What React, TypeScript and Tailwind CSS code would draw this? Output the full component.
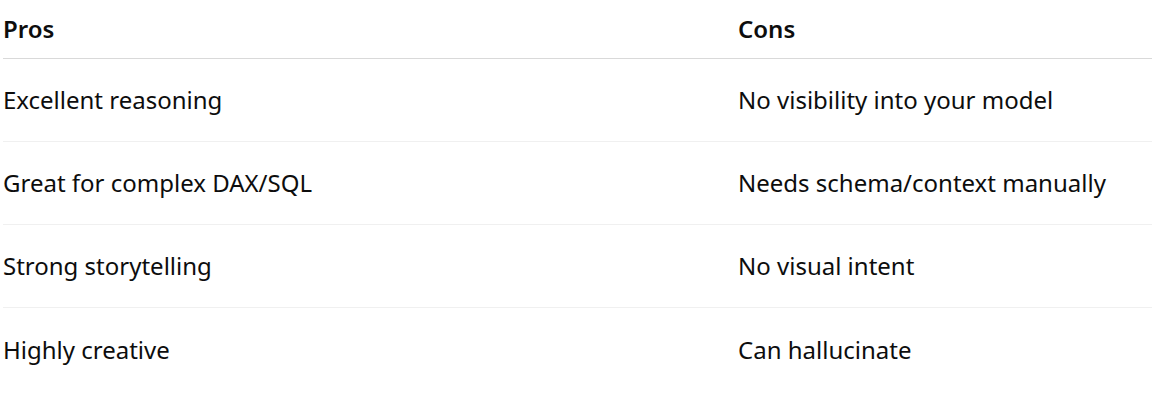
const rows = [
  ["Excellent reasoning", "No visibility into your model"],
  ["Great for complex DAX/SQL", "Needs schema/context manually"],
  ["Strong storytelling", "No visual intent"],
  ["Highly creative", "Can hallucinate"],
];

export default function App() {
  return (
    <div className="bg-white w-[1152px] h-[400px] pl-[3px] text-[#0d0d0d] text-[24px] font-['Noto_Sans',sans-serif]">
      <div className="grid grid-cols-[735px_1fr] h-[59px] items-center border-b border-[#d9d9d9] font-semibold">
        <div>Pros</div>
        <div>Cons</div>
      </div>
      {rows.map(([pro, con], i) => (
        <div
          key={pro}
          className={
            "grid grid-cols-[735px_1fr] h-[83px] items-center " +
            (i < rows.length - 1 ? "border-b border-[#f0f0f0]" : "")
          }
        >
          <div>{pro}</div>
          <div>{con}</div>
        </div>
      ))}
    </div>
  );
}
